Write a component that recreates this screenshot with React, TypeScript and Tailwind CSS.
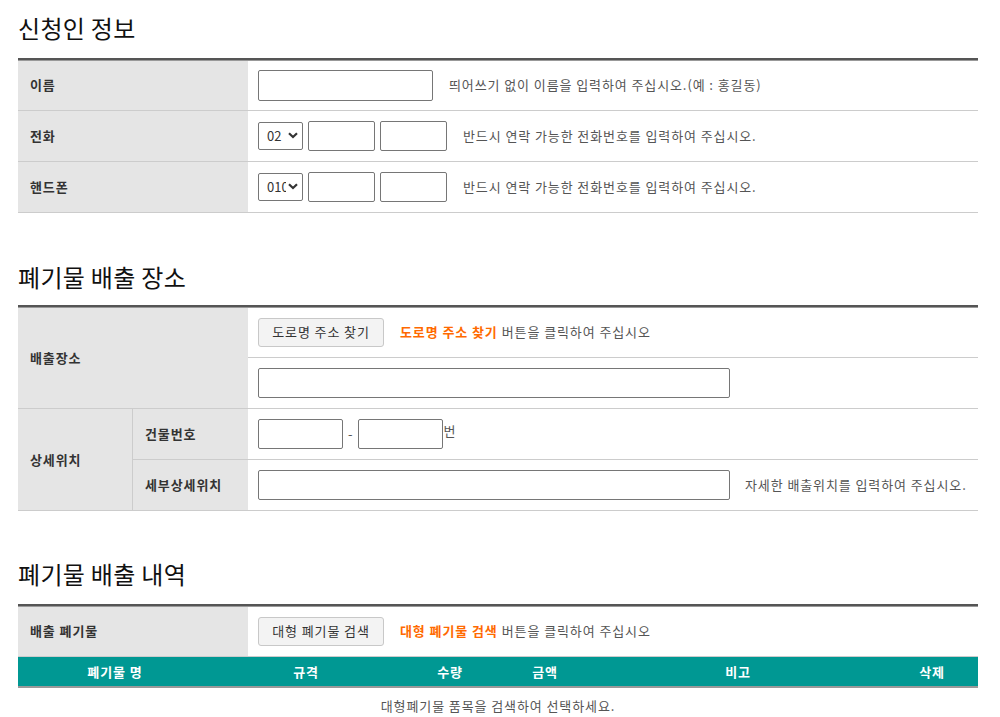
import { useState } from "react";

const inputCls =
  "h-[30px] border border-[#767676] rounded-[2px] bg-white px-1 text-[13px] outline-none";
const btnCls =
  "h-[29px] bg-[#f3f3f3] border border-[#c8c8c8] rounded-[3px] text-[13px] text-[#333]";
const labelCls =
  "bg-[#e5e5e5] flex items-center pl-3 text-[13px] font-bold text-[#333]";
const tableCls =
  "relative w-[960px] border-t-2 border-[#555] before:content-[''] before:absolute before:top-0 before:inset-x-0 before:h-px before:bg-[#999] before:z-10";

function Heading({ children, className }: { children: React.ReactNode; className: string }) {
  return (
    <h2
      className={`${className} h-[36px] flex items-center text-[24px] tracking-[0.3px] leading-none text-[#111]`}
    >
      {children}
    </h2>
  );
}

function PhoneSelect({ value }: { value: string }) {
  const [v, setV] = useState(value);
  return (
    <div className="relative w-[45px] h-[28px]">
      <select
        value={v}
        onChange={(e) => setV(e.target.value)}
        className="appearance-none w-full h-full border border-[#767676] rounded-[2px] bg-white pl-[8px] pr-[16px] text-[13px] tracking-normal text-[#333] outline-none"
      >
        <option>{value}</option>
      </select>
      <svg
        className="absolute right-[5px] top-[10px] pointer-events-none"
        width="10"
        height="7"
        viewBox="0 0 10 7"
      >
        <path d="M1 1.2 L5 5 L9 1.2" fill="none" stroke="#333" strokeWidth="2.2" />
      </svg>
    </div>
  );
}

function Row({ label, children }: { label: string; children: React.ReactNode }) {
  return (
    <div className="flex h-[51px] border-b border-[#ccc]">
      <div className={`${labelCls} w-[230px]`}>{label}</div>
      <div className="flex-1 flex items-center pl-[10px]">{children}</div>
    </div>
  );
}

export default function App() {
  return (
    <div className="w-[1000px] px-[18px] pb-4 bg-white font-['Noto_Sans_CJK_KR','Liberation_Sans',sans-serif] text-[#333] tracking-[0.9px]">
      <Heading className="mt-[10px] mb-[12px]">신청인 정보</Heading>
      <div className={tableCls}>
        <Row label="이름">
          <input className={`${inputCls} w-[175px] h-[31px]`} />
          <span className="ml-4 text-[13px] text-[#555]">
            띄어쓰기 없이 이름을 입력하여 주십시오.(예 : 홍길동)
          </span>
        </Row>
        <Row label="전화">
          <PhoneSelect value="02" />
          <input className={`${inputCls} w-[67px] ml-[5px]`} />
          <input className={`${inputCls} w-[67px] ml-[5px]`} />
          <span className="ml-4 text-[13px] text-[#555]">
            반드시 연락 가능한 전화번호를 입력하여 주십시오.
          </span>
        </Row>
        <Row label="핸드폰">
          <PhoneSelect value="010" />
          <input className={`${inputCls} w-[67px] ml-[5px]`} />
          <input className={`${inputCls} w-[67px] ml-[5px]`} />
          <span className="ml-4 text-[13px] text-[#555]">
            반드시 연락 가능한 전화번호를 입력하여 주십시오.
          </span>
        </Row>
      </div>

      <Heading className="mt-[46px] mb-[10px]">폐기물 배출 장소</Heading>
      <div className={tableCls}>
        <div className="flex">
          <div className={`${labelCls} w-[230px] border-b border-[#ccc]`}>배출장소</div>
          <div className="flex-1">
            <div className="flex h-[51px] items-center pl-[10px] border-b border-[#ccc]">
              <button className={`${btnCls} w-[126px]`}>도로명 주소 찾기</button>
              <span className="ml-4 text-[13px] font-bold text-[#ff6a00]">도로명 주소 찾기</span>
              <span className="ml-1 text-[13px] text-[#555]">버튼을 클릭하여 주십시오</span>
            </div>
            <div className="flex h-[51px] items-center pl-[10px] border-b border-[#ccc]">
              <input className={`${inputCls} w-[472px]`} />
            </div>
          </div>
        </div>
        <div className="flex">
          <div className={`${labelCls} w-[115px] border-b border-r border-[#ccc]`}>상세위치</div>
          <div className="flex-1">
            <div className="flex h-[51px] border-b border-[#ccc]">
              <div className={`${labelCls} w-[115px]`}>건물번호</div>
              <div className="flex-1 flex items-center pl-[10px]">
                <input className={`${inputCls} w-[85px]`} />
                <span className="mx-[5px] text-[13px] text-[#555]">-</span>
                <input className={`${inputCls} w-[85px]`} />
                <span className="self-start mt-[12px] text-[13px] text-[#555]">번</span>
              </div>
            </div>
            <div className="flex h-[51px] border-b border-[#ccc]">
              <div className={`${labelCls} w-[115px]`}>세부상세위치</div>
              <div className="flex-1 flex items-center pl-[10px]">
                <input className={`${inputCls} w-[472px]`} />
                <span className="ml-[15px] text-[13px] text-[#555]">
                  자세한 배출위치를 입력하여 주십시오.
                </span>
              </div>
            </div>
          </div>
        </div>
      </div>

      <Heading className="mt-[45px] mb-[12px]">폐기물 배출 내역</Heading>
      <div className={tableCls}>
        <Row label="배출 폐기물">
          <button className={`${btnCls} w-[126px]`}>대형 폐기물 검색</button>
          <span className="ml-4 text-[13px] font-bold text-[#ff6a00]">대형 폐기물 검색</span>
          <span className="ml-1 text-[13px] text-[#555]">버튼을 클릭하여 주십시오</span>
        </Row>
        <div className="grid grid-cols-[194px_188px_100px_90px_296px_92px] h-[31px] bg-[#009893] border-b-2 border-[#999] text-[13px] font-bold text-white">
          {["폐기물 명", "규격", "수량", "금액", "비고", "삭제"].map((h) => (
            <div key={h} className="flex items-center justify-center">
              {h}
            </div>
          ))}
        </div>
        <div className="h-[36px] flex items-center justify-center text-[13px] text-[#555]">
          대형폐기물 품목을 검색하여 선택하세요.
        </div>
      </div>
    </div>
  );
}
